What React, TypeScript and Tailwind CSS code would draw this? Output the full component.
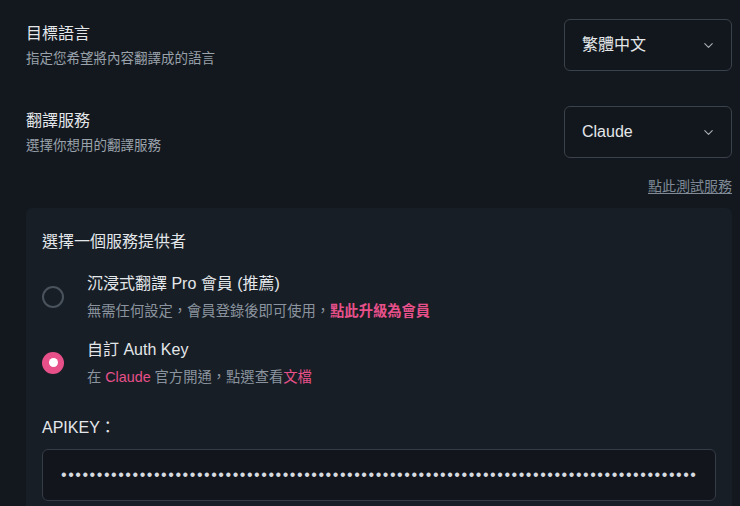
import { ChevronDown } from 'lucide-react'

const font = { fontFamily: '"Liberation Sans", "Noto Sans CJK TC", sans-serif' }

function Select({ value }: { value: string }) {
  return (
    <div className="w-[168px] h-[52px] shrink-0 flex items-center justify-between pl-[17px] pr-[15px] rounded-md border border-[#3a424c] bg-[#12171d]">
      <span className="text-base text-[#e4e7ea]">{value}</span>
      <ChevronDown size={15} strokeWidth={1.75} className="text-[#aab1b9]" />
    </div>
  )
}

function SettingRow({ title, desc, value }: { title: string; desc: string; value: string }) {
  return (
    <div className="flex items-center justify-between">
      <div className="flex flex-col">
        <div className="text-base leading-6 text-[#e4e7ea]">{title}</div>
        <div className="text-[13.5px] leading-5 mt-[3px] text-[#9aa2ab]">{desc}</div>
      </div>
      <Select value={value} />
    </div>
  )
}

function Radio({ checked }: { checked?: boolean }) {
  if (checked) {
    return (
      <div className="w-[22px] h-[22px] rounded-full bg-[#e8508a] flex items-center justify-center shrink-0">
        <div className="w-[9px] h-[9px] rounded-full bg-white" />
      </div>
    )
  }
  return <div className="w-[22px] h-[22px] rounded-full border-2 border-[#4a525c] shrink-0" />
}

export default function App() {
  return (
    <div className="min-h-screen bg-[#13181e] pl-[26px] pr-[8px] pt-[19px]" style={font}>
      <SettingRow title="目標語言" desc="指定您希望將內容翻譯成的語言" value="繁體中文" />
      <div className="mt-[35px]">
        <SettingRow title="翻譯服務" desc="選擇你想用的翻譯服務" value="Claude" />
      </div>
      <div className="flex justify-end mt-[18px]">
        <a className="text-sm leading-5 text-[#7f8a96] underline underline-offset-2">點此測試服務</a>
      </div>

      {/* Provider panel */}
      <div className="mt-[12px] bg-[#171e26] rounded-t-md px-4 pt-[24px] pb-4">
        <div className="text-base leading-5 text-[#e4e7ea]">選擇一個服務提供者</div>

        <div className="mt-[20px] flex items-center">
          <Radio />
          <div className="ml-[23px] flex flex-col">
            <div className="text-base leading-6 text-[#e4e7ea]">沉浸式翻譯 Pro 會員 (推薦)</div>
            <div className="text-[14.3px] leading-5 mt-[5px] text-[#8b949e]">
              無需任何設定，會員登錄後即可使用，<span className="text-[#e8508a] font-bold">點此升級為會員</span>
            </div>
          </div>
        </div>

        <div className="mt-[17px] flex items-center">
          <Radio checked />
          <div className="ml-[23px] flex flex-col">
            <div className="text-base leading-6 text-[#e4e7ea]">自訂 Auth Key</div>
            <div className="text-[14.3px] leading-5 mt-[5px] text-[#8b949e]">
              在 <span className="text-[#e8508a]">Claude</span> 官方開通，點選查看<span className="text-[#e8508a]">文檔</span>
            </div>
          </div>
        </div>

        <div className="mt-[31px] text-base leading-5 text-[#e4e7ea]">APIKEY：</div>
        <input
          type="password"
          readOnly
          value={'x'.repeat(90)}
          className="mt-[11px] w-full h-[52px] px-[18px] rounded-md border border-[#343c46] bg-[#12161c] text-[#d7dbe0] text-base tracking-[1.55px] outline-none"
        />
      </div>
    </div>
  )
}
